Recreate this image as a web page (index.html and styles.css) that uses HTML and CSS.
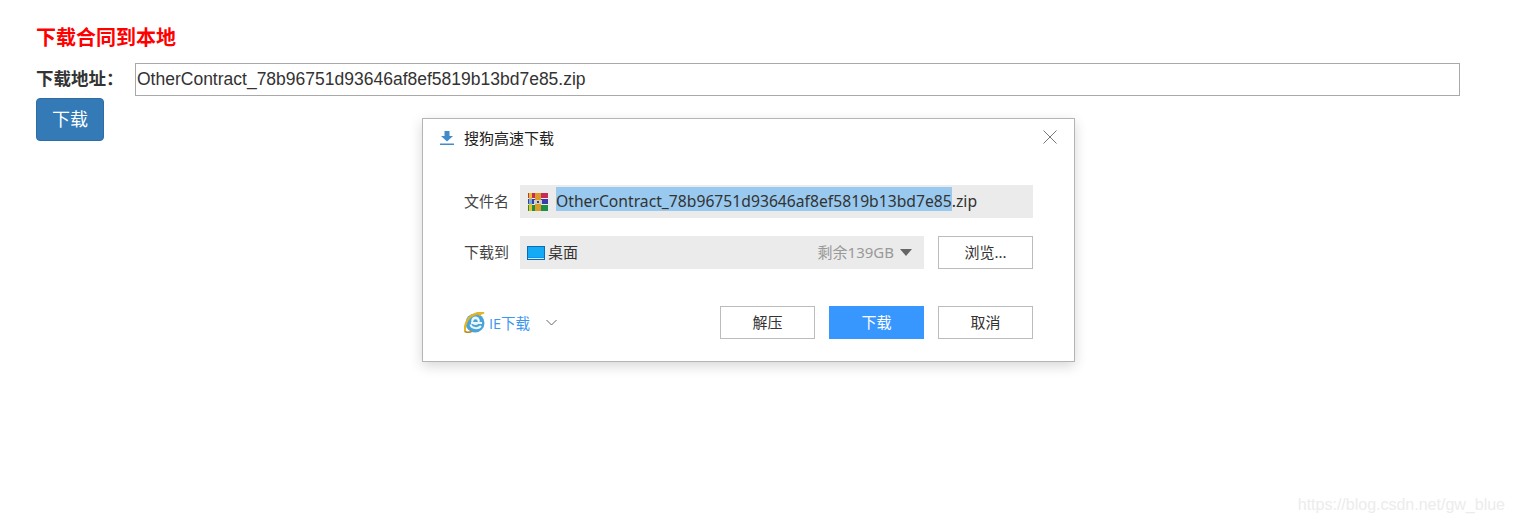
FILE: index.html
```html
<!DOCTYPE html>
<html lang="zh">
<head>
<meta charset="utf-8">
<title>下载合同到本地</title>
<link rel="stylesheet" href="styles.css">
</head>
<body>
<main class="page">
  <h1 class="title">下载合同到本地</h1>
  <div class="addr-row">
    <label class="addr-label" for="addr">下载地址：</label>
    <input class="addr-input" id="addr" type="text" value="OtherContract_78b96751d93646af8ef5819b13bd7e85.zip">
  </div>
  <button class="btn-primary" type="button">下载</button>
</main>

<section class="dialog">
  <header class="dlg-head">
    <svg class="dlg-logo" width="14" height="14" viewBox="0 0 14 14"><path d="M4.500 0h5v5H13L7 10.500 1 5h3.500z" fill="#428bca"/><rect x="0" y="12.500" width="14" height="1.500" fill="#428bca"/></svg>
    <span class="dlg-title">搜狗高速下载</span>
    <svg class="dlg-close" width="14" height="14" viewBox="0 0 14 14"><path d="M.5.500l13 13M13.500.500l-13 13" stroke="#777" stroke-width="1" fill="none"/></svg>
  </header>

  <div class="dlg-row dlg-row-name">
    <span class="dlg-label">文件名</span>
    <div class="field field-name">
      <svg class="rar" width="20" height="18" viewBox="0 0 20 18">
        <rect x="0" y="0" width="20" height="5" fill="#c92a55"/>
        <rect x="0" y="6" width="20" height="5" fill="#3d3aa6"/>
        <rect x="0" y="12" width="20" height="6" fill="#1c8f45"/>
        <rect x="1" y="0" width="3" height="18" fill="#e4c22e"/>
        <rect x="1" y="6" width="3" height="5" fill="#6fa9e0"/>
        <rect x="7" y="0" width="6" height="18" fill="#dd9a28"/>
        <rect x="6" y="7" width="8" height="4" fill="#cfcfcf"/>
        <rect x="9" y="8" width="2" height="2" fill="#444"/>
      </svg>
      <span class="fname"><span class="sel">OtherContract_78b96751d93646af8ef5819b13bd7e85</span>.zip</span>
    </div>
  </div>

  <div class="dlg-row dlg-row-path">
    <span class="dlg-label">下载到</span>
    <div class="field field-path">
      <svg class="desk" width="18" height="14" viewBox="0 0 18 14"><rect x=".5" y=".5" width="17" height="13" fill="#0b97f0" stroke="#0a6cb5"/><rect x="1" y="1" width="16" height="10" fill="#14aaf5"/><rect x="1" y="12" width="16" height="1" fill="#cfe8fa"/></svg>
      <span class="path-name">桌面</span>
      <span class="free">剩余139GB</span>
      <span class="caret"></span>
    </div>
    <button class="btn" type="button">浏览...</button>
  </div>

  <footer class="dlg-foot">
    <svg class="ie" width="21" height="21" viewBox="0 0 21 21">
      <circle cx="11" cy="11" r="9.500" fill="#4aa3d8"/>
      <path d="M1 20C0 14 3 6 9 3c4-2 8-3 11-2.500-2 .5-4 1.500-5 3" fill="none" stroke="#e6b422" stroke-width="2.200"/>
      <circle cx="11.500" cy="8.800" r="4.300" fill="#eaf6fc"/>
      <circle cx="11.500" cy="9.500" r="2.200" fill="#4aa3d8"/>
      <rect x="7" y="10" width="11" height="2" fill="#eaf6fc"/>
      <path d="M6.500 12.500c1 4 7.500 5 10.500 1.500" fill="none" stroke="#eaf6fc" stroke-width="2"/>
      <path d="M1 19.500c2 1.200 5 .8 7-.5" fill="none" stroke="#b58d2a" stroke-width="1.500"/>
    </svg>
    <span class="engine">IE下载</span>
    <svg class="chev" width="11" height="7" viewBox="0 0 11 7"><path d="M.5 1l5 5 5-5" fill="none" stroke="#666" stroke-width="1"/></svg>
    <div class="foot-btns">
      <button class="btn" type="button">解压</button>
      <button class="btn btn-blue" type="button">下载</button>
      <button class="btn" type="button">取消</button>
    </div>
  </footer>
</section>

<div class="watermark">https://blog.csdn.net/gw_blue</div>
</body>
</html>
```
FILE: styles.css
```css
* { box-sizing: border-box; }
html, body { margin: 0; height: 100%; background: #fff; overflow: hidden; }
body {
  position: relative;
  font-family: "Liberation Sans", "Noto Sans CJK SC", sans-serif;
  color: #333;
}
.page { padding: 25px 53px 0 36px; }
.title {
  margin: 0;
  font-size: 20px;
  line-height: 26px;
  font-weight: 700;
  color: #f00;
}
.addr-row { display: flex; align-items: center; margin-top: 12px; }
.addr-label {
  width: 99px;
  flex: none;
  padding-bottom: 4px;
  font-size: 17.5px;
  font-weight: 700;
  color: #333;
}
.addr-input {
  flex: 1;
  height: 33px;
  padding: 0 1px;
  border: 1px solid #a9a9a9;
  border-radius: 0;
  outline: 0;
  font: 17.5px "Liberation Sans", sans-serif;
  color: #333;
}
.btn-primary {
  display: block;
  width: 68px;
  height: 43px;
  margin-top: 2px;
  padding: 0 0 4px;
  border: 1px solid #2e6da4;
  border-radius: 4px;
  background: #337ab7;
  color: #fff;
  font: 18px "Liberation Sans", "Noto Sans CJK SC", sans-serif;
}
.dialog {
  position: absolute;
  left: 422px;
  top: 118px;
  width: 653px;
  height: 244px;
  padding: 0 41px;
  background: #fff;
  border: 1px solid #b4b4b4;
  box-shadow: 0 4px 12px rgba(0, 0, 0, .16);
  font-family: "Noto Sans", "Noto Sans CJK SC", sans-serif;
  font-size: 15px;
  color: #333;
}
.dlg-head {
  display: flex;
  align-items: center;
  height: 36px;
  margin: 0 -24px;
}
.dlg-logo { flex: none; margin-top: 2px; }
.dlg-title { margin-left: 10px; color: #222; }
.dlg-close { margin-left: auto; flex: none; }
.dlg-row { display: flex; align-items: center; height: 33px; }
.dlg-row-name { margin-top: 30px; }
.dlg-row-path { margin-top: 18px; }
.dlg-label { width: 56px; flex: none; padding-bottom: 2px; color: #444; }
.field { display: flex; align-items: center; height: 33px; background: #ebebeb; }
.field-name { width: 513px; padding-left: 8px; }
.field-path { width: 404px; padding-left: 7px; }
.rar { flex: none; }
.fname { margin-left: 8px; font-size: 15.7px; color: #333; white-space: nowrap; line-height: 24px; position: relative; top: -1px; }
.sel { display: inline-block; height: 24px; padding-top: 2px; margin-top: -2px; background: #99c9ee; }
.desk { flex: none; }
.path-name { margin-left: 3px; padding-bottom: 2px; color: #333; }
.free { margin-left: auto; padding-bottom: 2px; color: #999; }
.caret {
  width: 0;
  height: 0;
  margin: 0 12px 0 6px;
  border-left: 6px solid transparent;
  border-right: 6px solid transparent;
  border-top: 7px solid #666;
}
.btn {
  width: 95px;
  height: 33px;
  padding: 0 0 2px;
  background: #fff;
  border: 1px solid #bcbcbc;
  border-radius: 0;
  font: 15px "Noto Sans", "Noto Sans CJK SC", sans-serif;
  color: #333;
}
.dlg-row .btn { margin-left: 14px; }
.btn-blue { background: #3897ff; border-color: #3897ff; color: #fff; }
.dlg-foot { display: flex; align-items: center; height: 33px; margin-top: 37px; }
.ie { flex: none; }
.engine { width: 42px; margin-left: 4px; padding-bottom: 1px; font-family: "Open Sans", "Noto Sans CJK SC", sans-serif; font-size: 14.5px; color: #3c96f0; white-space: nowrap; }
.chev { flex: none; margin-left: 15px; }
.foot-btns { display: flex; gap: 14px; margin-left: auto; }
.watermark {
  position: absolute;
  right: 8px;
  top: 495px;
  font-size: 16px;
  line-height: 20px;
  color: #ececec;
}
```
